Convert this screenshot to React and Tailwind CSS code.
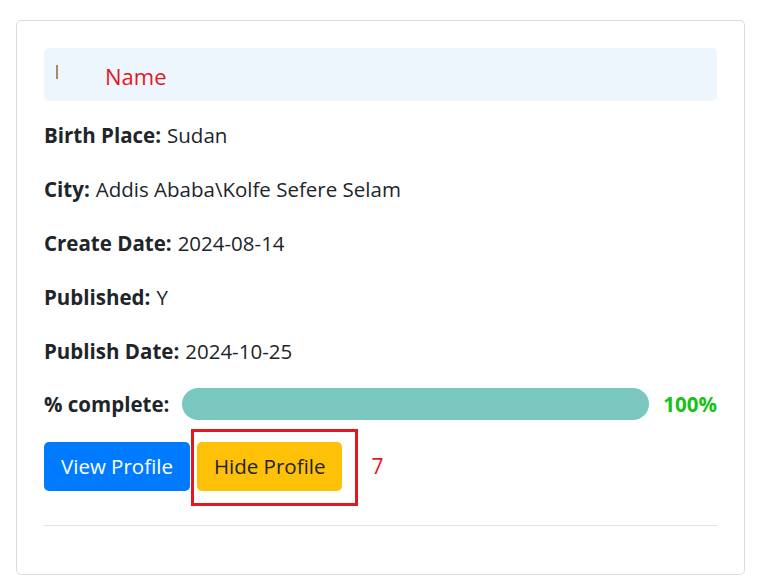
import React from 'react'

const rows = [
  ['Birth Place:', 'Sudan'],
  ['City:', 'Addis Ababa\\Kolfe Sefere Selam'],
  ['Create Date:', '2024-08-14'],
  ['Published:', 'Y'],
  ['Publish Date:', '2024-10-25'],
]

export default function App() {
  return (
    <div className="bg-white min-h-screen pt-[20px] px-[16px] text-[#212529]" style={{ fontFamily: '"Open Sans", "Noto Sans", sans-serif' }}>
      <div className="w-[729px] border border-[#dcdcdc] rounded-[5px] px-[27px] pt-[27px] pb-[48px]">
        {/* name header */}
        <div className="h-[53px] bg-[#eef6fd] rounded-[5px] flex items-center pl-[12px]">
          <span className="w-[2px] h-[14px] bg-[#8b5a2b] opacity-70 -mt-[6px]"></span>
          <span className="ml-[47px] text-[22px] text-[#e3171f] mt-[4px]">Name</span>
        </div>

        <div className="mt-[19px] flex flex-col gap-[24px]">
          {rows.map(([label, value]) => (
            <div key={label} className="h-[30px] flex items-center text-[20.5px] leading-[30px]">
              <span className="font-bold">{label}</span>
              <span className="ml-[6px]">{value}</span>
            </div>
          ))}
        </div>

        <div className="mt-[22px] h-[32px] flex items-center">
          <span className="font-bold text-[20.5px]">% complete:</span>
          <div className="flex-1 ml-[13px] h-[32px] rounded-full bg-[#79c7bf]"></div>
          <span className="ml-[14px] font-bold text-[20.5px] text-[#16c216]">100%</span>
        </div>

        <div className="mt-[22px] flex items-center">
          <button className="h-[49px] px-[17px] rounded-[5px] bg-[#007bff] text-white text-[20.5px]">View Profile</button>
          <span className="relative ml-[7px]">
            <button className="h-[49px] px-[17px] rounded-[5px] bg-[#ffc107] text-[#212529] text-[20.5px]">Hide Profile</button>
            <span className="absolute -left-[6px] -top-[13px] -right-[16px] -bottom-[15px] border-[3px] border-[#e3171f] pointer-events-none"></span>
          </span>
          <span className="ml-[29px] text-[21px] text-[#e3171f]">7</span>
        </div>

        <hr className="mt-[34px] border-t border-[#e0e0e0]" />
      </div>
    </div>
  )
}
